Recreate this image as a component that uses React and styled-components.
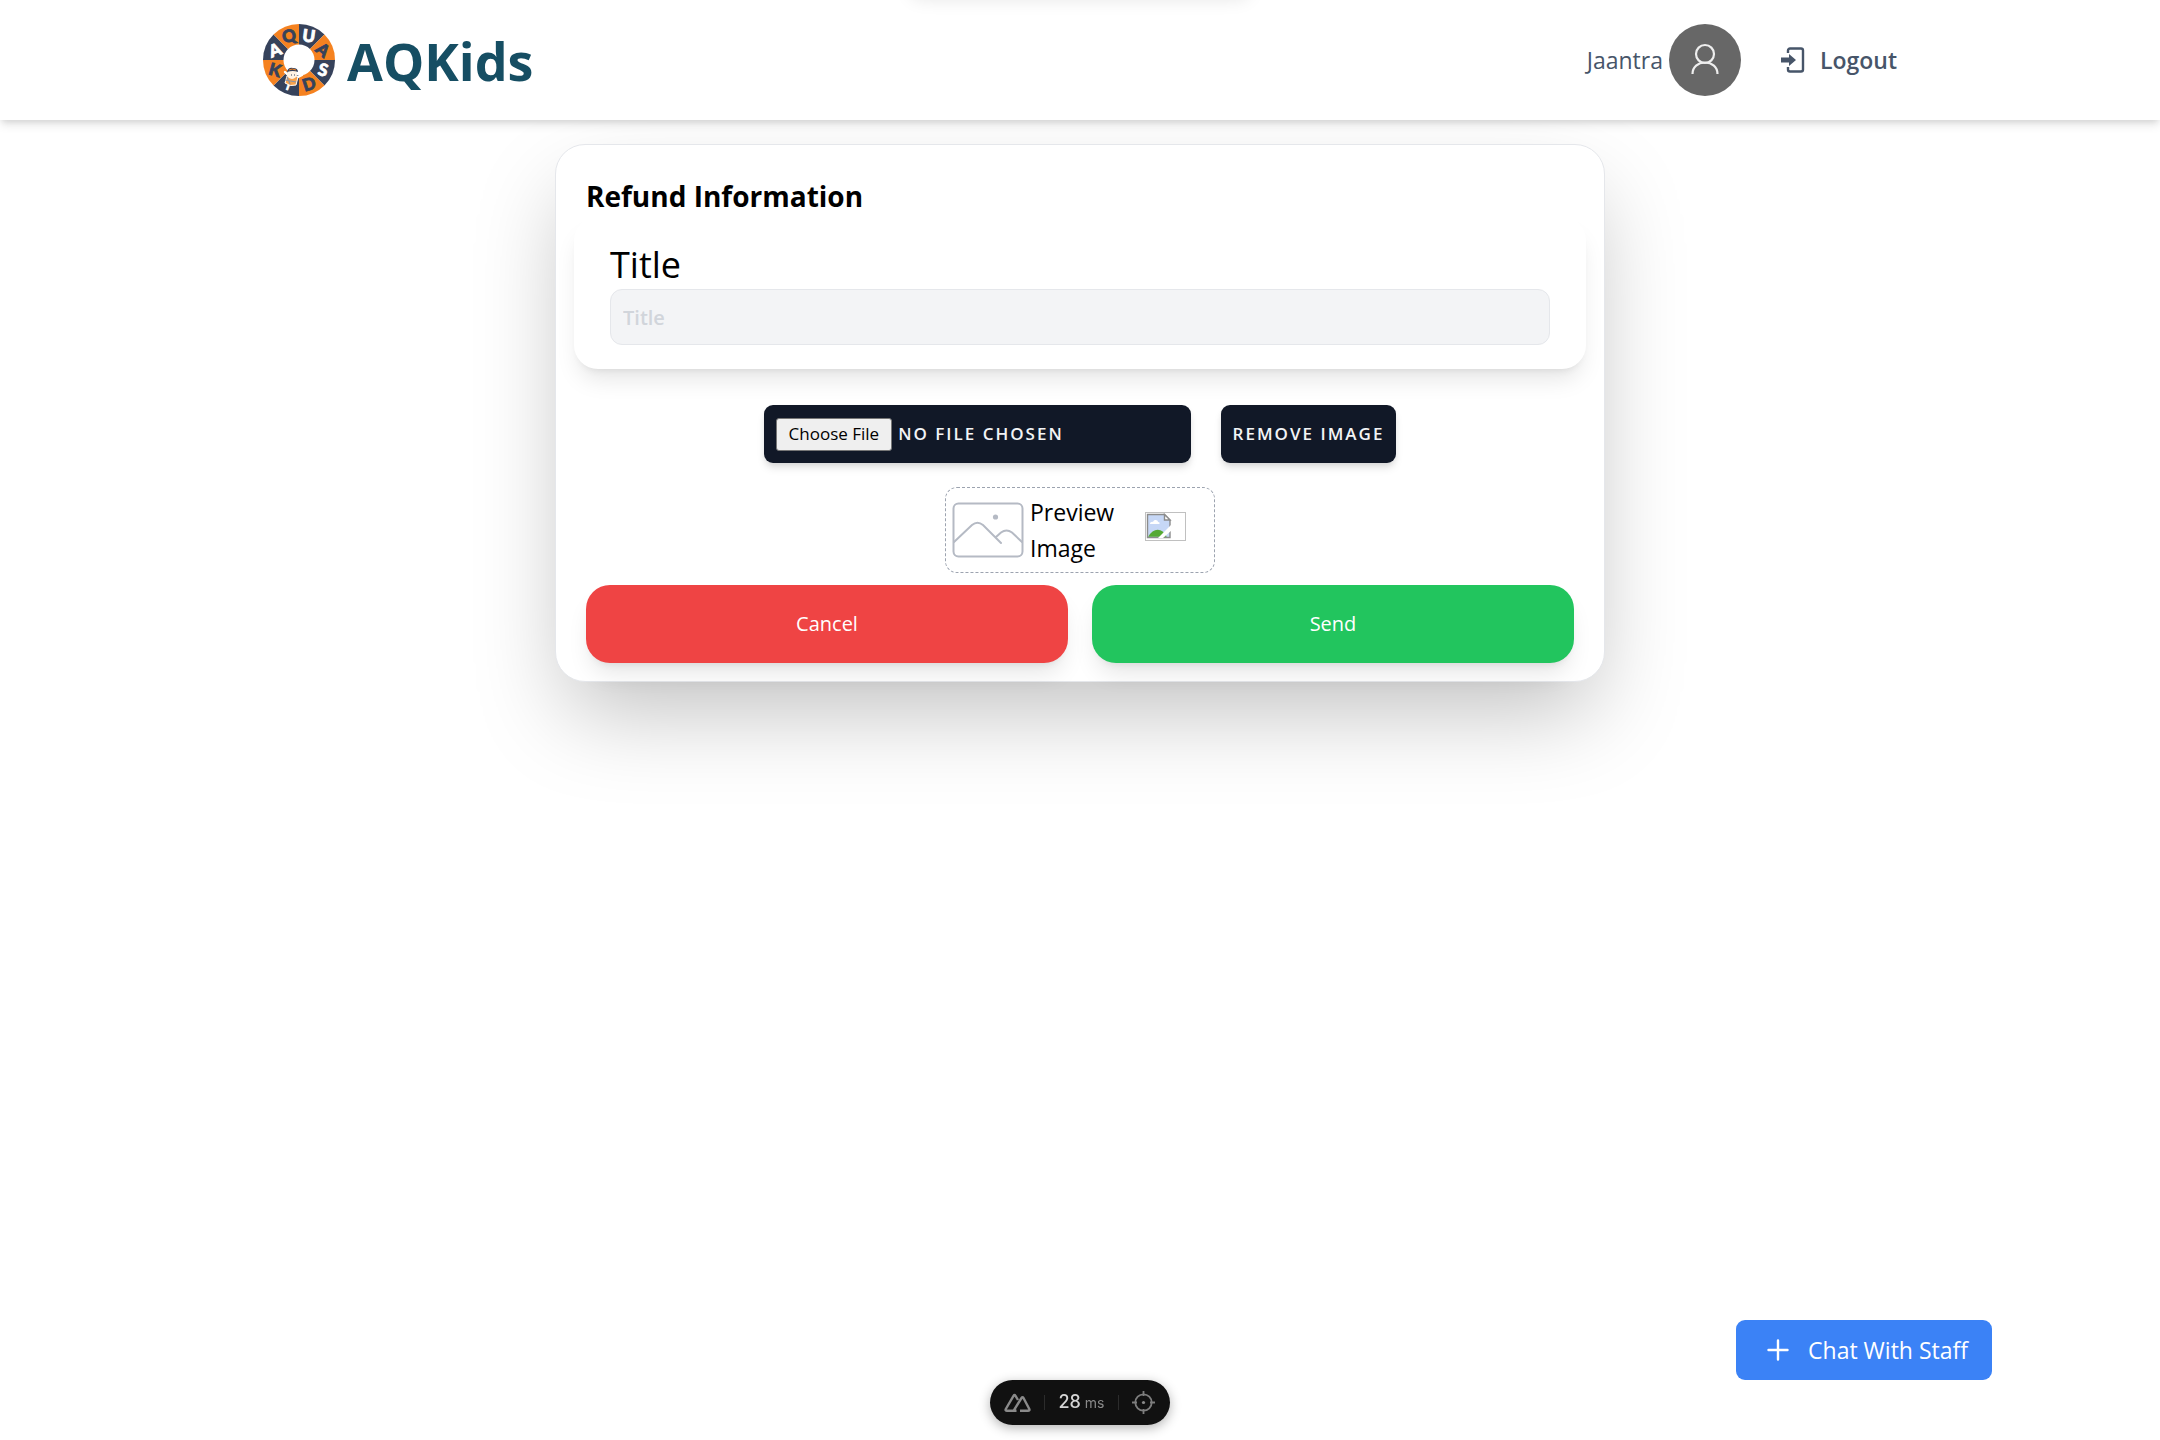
import React from "react";
import styled, { createGlobalStyle, css } from "styled-components";

const GlobalStyle = createGlobalStyle`
  *, *::before, *::after { box-sizing: border-box; }
  body {
    margin: 0;
    background: #fff;
    color: #000;
    font-family: "Open Sans", "Noto Sans", sans-serif;
    font-size: 23px;
    line-height: 36px;
  }
  h1, h2, p { margin: 0; }
  button, input { font: inherit; }
  button { border: 0; cursor: pointer; }
`;

const Header = styled.header`
  position: relative;
  background: #fff;
  box-shadow: 0 6px 9px -1px rgba(0, 0, 0, 0.1), 0 3px 6px -2px rgba(0, 0, 0, 0.1);
`;

const HeaderInner = styled.div`
  display: flex;
  align-items: center;
  justify-content: space-between;
  max-width: 1634px;
  height: 120px;
  margin: 0 auto;
`;

const Brand = styled.a`
  display: flex;
  align-items: center;
  gap: 12px;
  color: #164e63;
  font-size: 52px;
  font-weight: 700;
  line-height: 60px;
  text-decoration: none;
`;

const BrandName = styled.span`
  padding-top: 2px;
`;

const Account = styled.div`
  display: flex;
  align-items: center;
  gap: 6px;
  color: #475569;
`;

const Avatar = styled.span`
  display: grid;
  place-items: center;
  width: 72px;
  height: 72px;
  border-radius: 50%;
  background: #676767;
`;

const LogoutButton = styled.button`
  display: flex;
  align-items: center;
  gap: 14px;
  margin-left: 33px;
  padding: 0;
  background: none;
  color: #475569;
  font-weight: 600;
`;

const Main = styled.main`
  display: flex;
  align-items: flex-start;
  justify-content: center;
  min-height: calc(100vh - 120px);
  padding: 24px;
`;

const Card = styled.form`
  width: 100%;
  max-width: 1050px;
  padding: 18px;
  border: 1px solid #e5e7eb;
  border-radius: 30px;
  background: #fff;
  box-shadow: 0 40px 90px -12px rgba(0, 0, 0, 0.25);
`;

const CardTitle = styled.h1`
  padding: 12px 12px 0;
  font-size: 28px;
  font-weight: 700;
  line-height: 42px;
`;

const Panel = styled.section`
  padding: 24px 36px;
  border-radius: 24px;
  box-shadow: 0 15px 23px -5px rgba(0, 0, 0, 0.1), 0 6px 9px -6px rgba(0, 0, 0, 0.1);
`;

const FieldLabel = styled.label`
  display: block;
  font-size: 36px;
  font-weight: 500;
  line-height: 48px;
`;

const TextField = styled.input`
  display: block;
  width: 100%;
  height: 56px;
  padding: 0 12px;
  border: 1px solid #e5e7eb;
  border-radius: 12px;
  background: #f3f4f6;
  font-size: 20px;
  font-weight: 600;
  &::placeholder { color: #d1d5db; opacity: 1; }
`;

const UploadRow = styled.div`
  display: flex;
  justify-content: center;
  gap: 30px;
  margin-top: 36px;
`;

const darkControl = css`
  height: 58px;
  padding: 12px;
  border-radius: 9px;
  background: #111827;
  box-shadow: 0 6px 9px -1px rgba(0, 0, 0, 0.1), 0 3px 6px -2px rgba(0, 0, 0, 0.1);
  color: #f3f4f6;
  font-size: 17px;
  font-weight: 600;
  letter-spacing: 2px;
  line-height: 34px;
  text-transform: uppercase;
`;

const FileInput = styled.input`
  ${darkControl}
  width: 427px;
  &::file-selector-button {
    height: 33px;
    margin: 0 6px 0 0;
    padding: 0 12px;
    border: 1px solid #767676;
    border-radius: 3px;
    background: #efefef;
    color: #000;
    font: 400 17px/30px "Open Sans", "Noto Sans", sans-serif;
    letter-spacing: normal;
    text-transform: none;
  }
`;

const DarkButton = styled.button`
  ${darkControl}
`;

const Preview = styled.figure`
  display: flex;
  align-items: center;
  width: 270px;
  margin: 24px auto 12px;
  padding: 6px;
  border: 1px dashed #9ca3af;
  border-radius: 12px;
`;

const PreviewText = styled.figcaption`
  flex: 1;
  padding-left: 6px;
  line-height: 36px;
`;

const MissingImage = styled.span`
  display: flex;
  width: 41px;
  height: 29px;
  margin: 0 22px 8px 0;
  border: 1px solid #c0c0c0;
`;

const Actions = styled.div`
  display: grid;
  grid-template-columns: 1fr 1fr;
  gap: 24px;
  padding: 0 12px;
`;

const ActionButton = styled.button`
  height: 78px;
  border-radius: 24px;
  background: ${(p) => p.$color};
  box-shadow: 0 15px 23px -5px rgba(0, 0, 0, 0.1), 0 6px 9px -6px rgba(0, 0, 0, 0.1);
  color: #fff;
  font-size: 20px;
`;

const ChatButton = styled.button`
  position: fixed;
  right: 168px;
  bottom: 60px;
  display: flex;
  align-items: center;
  gap: 18px;
  height: 60px;
  padding: 0 24px 0 30px;
  border-radius: 9px;
  background: #3b82f6;
  color: #fff;
`;

const DevBar = styled.aside`
  position: fixed;
  bottom: 15px;
  left: 50%;
  display: flex;
  align-items: center;
  justify-content: space-between;
  width: 180px;
  height: 45px;
  padding: 0 15px 0 14px;
  transform: translateX(-50%);
  border-radius: 23px;
  background: #111;
  box-shadow: 0 3px 12px rgba(0, 0, 0, 0.3);
  color: #d4d4d4;
  font-family: Inter, "Liberation Sans", sans-serif;
  font-size: 18px;
  font-weight: 500;
`;

const Divider = styled.span`
  width: 1px;
  height: 15px;
  background: #2c2c2c;
`;

const Timing = styled.span`
  display: flex;
  align-items: baseline;
  gap: 4px;
`;

const Unit = styled.small`
  color: #8a8a8a;
  font-size: 14px;
  font-weight: 400;
`;

const Toast = styled.div`
  position: fixed;
  z-index: 1;
  top: -60px;
  left: 50%;
  width: 340px;
  height: 54px;
  transform: translateX(-50%);
  border-radius: 12px;
  box-shadow: 0 5px 18px rgba(0, 0, 0, 0.1);
`;

const RING = [
  ["U", "#36425b", "#fff"],
  ["A", "#f58220", "#36425b"],
  ["S", "#36425b", "#fff"],
  ["D", "#f58220", "#36425b"],
  ["I", "#36425b", "#fff"],
  ["K", "#f58220", "#36425b"],
  ["A", "#36425b", "#fff"],
  ["Q", "#f58220", "#36425b"],
];
const LETTER_TURN = [8, 40, 15, -18, 20, 15, -20, -12];

function ringPoint(deg, r) {
  const a = (deg * Math.PI) / 180;
  return [36 + r * Math.sin(a), 36 - r * Math.cos(a)];
}

function Logo() {
  return (
    <svg width="72" height="72" viewBox="0 0 72 72" aria-hidden="true">
      {RING.map(([, fill], i) => {
        const [x1, y1] = ringPoint(i * 45, 36);
        const [x2, y2] = ringPoint(i * 45 + 45, 36);
        return <path key={i} fill={fill} d={`M36 36L${x1} ${y1}A36 36 0 0 1 ${x2} ${y2}Z`} />;
      })}
      <circle cx="36" cy="36" r="15.5" fill="#fff" />
      {RING.map(([letter, , ink], i) => {
        const [x, y] = ringPoint(i * 45 + 22.5, 26);
        return (
          <text
            key={i}
            x={x}
            y={y + 6}
            transform={`rotate(${LETTER_TURN[i]} ${x} ${y})`}
            fill={ink}
            stroke={ink}
            strokeWidth="0.8"
            fontFamily="Lato, sans-serif"
            fontSize={letter === "I" ? 10 : 17}
            fontWeight="900"
            textAnchor="middle"
          >
            {letter}
          </text>
        );
      })}
      <path d="M22 48l5 5M39 51l-6 3" stroke="#fff" strokeWidth="2.4" strokeLinecap="round" />
      <path d="M24 52q5-3 11 1l-2 8q-6 2-11-2z" fill="#f9a24b" stroke="#fff" />
      <path d="M22 56l11 2M24 53l3 7" stroke="#8a93a3" strokeWidth="1.2" />
      <circle cx="29" cy="50" r="5" fill="#fff3e4" />
      <path d="M24 48q1-5 6-4 5 0 5 4-5-2-11 0z" fill="#36425b" />
      <path d="M26 46q3-2 7 0" stroke="#f58220" fill="none" />
      <path d="M28 51h1M31 51h1" stroke="#36425b" />
    </svg>
  );
}

function UserIcon() {
  return (
    <svg width="30" height="34" viewBox="0 0 30 34" fill="none" stroke="#eee" strokeWidth="2.2" aria-hidden="true">
      <circle cx="15" cy="11" r="9" />
      <path d="M2.500 31c0-7 5.500-11.500 12.500-11.500s12.500 4.500 12.500 11.500" />
    </svg>
  );
}

function LogoutIcon() {
  return (
    <svg width="26" height="28" viewBox="0 0 26 28" fill="none" aria-hidden="true">
      <path d="M8 7V4.500a2 2 0 0 1 2-2h11a2 2 0 0 1 2 2v19a2 2 0 0 1-2 2H10a2 2 0 0 1-2-2V21" stroke="#475569" strokeWidth="2.400" />
      <path d="M1 11.500h8V8l7 6-7 6v-3.500H1z" fill="#475569" />
    </svg>
  );
}

function PictureIcon() {
  return (
    <svg width="72" height="56" viewBox="0 0 72 56" fill="none" stroke="#b5bac4" strokeWidth="2" strokeLinecap="round" aria-hidden="true">
      <rect x="1.500" y="1.500" width="69" height="53" rx="5" />
      <path d="M2 40L20 23q5.500-4.500 11 0L49 41M44 35l5-4.500q5.500-4 11 0L70 40" />
      <circle cx="43.500" cy="15" r="2.600" fill="#b5bac4" stroke="none" />
    </svg>
  );
}

function BrokenIcon() {
  return (
    <svg width="26" height="26" viewBox="0 0 26 26" aria-hidden="true">
      <path d="M1.500 1.500h17l5.500 5.500v17.500H1.500z" fill="#c6d7f6" stroke="#8c8c8c" strokeWidth="1.400" />
      <path d="M4 11c0-2 2-2.500 3-2 1-3 5-2 5 0 2 0 2 2 1 2z" fill="#fff" />
      <path d="M2.200 23.800q4-7 9.500-7t9 7z" fill="#55a934" />
      <path d="M18.500 1.500V7H24z" fill="#fff" stroke="#8c8c8c" strokeWidth="1.400" />
      <path d="M25 12L12 25h5l9-8z" fill="#fff" />
    </svg>
  );
}

function PlusIcon() {
  return (
    <svg width="24" height="24" viewBox="0 0 24 24" stroke="#fff" strokeWidth="2.400" strokeLinecap="round" aria-hidden="true">
      <path d="M12 2.500v19M2.500 12h19" />
    </svg>
  );
}

function PeaksIcon() {
  return (
    <svg width="27" height="20" viewBox="0 0 27 20" fill="none" stroke="#8a8a8a" strokeWidth="2.400" strokeLinejoin="round" aria-hidden="true">
      <path d="M12.500 17.800H3q-2 0-1.200-1.800L9.500 2.800q1-1.500 2 0L14 7M9.500 17.800L17.500 5q1-1.500 2 0L25.300 16q.7 1.800-1.300 1.800h-8" />
    </svg>
  );
}

function TargetIcon() {
  return (
    <svg width="23" height="23" viewBox="0 0 23 23" fill="none" stroke="#7d7d7d" strokeWidth="1.800" aria-hidden="true">
      <circle cx="11.500" cy="11.500" r="8.200" />
      <path d="M11.500 0v5M11.500 18v5M0 11.500h5M18 11.500h5" />
      <circle cx="11.500" cy="11.500" r="1.600" fill="#8a8a8a" stroke="none" />
    </svg>
  );
}

export default function App() {
  return (
    <>
      <GlobalStyle />
      <Toast />
      <Header>
        <HeaderInner>
          <Brand href="#">
            <Logo />
            <BrandName>AQKids</BrandName>
          </Brand>
          <Account>
            <span>Jaantra</span>
            <Avatar>
              <UserIcon />
            </Avatar>
            <LogoutButton type="button">
              <LogoutIcon />
              Logout
            </LogoutButton>
          </Account>
        </HeaderInner>
      </Header>
      <Main>
        <Card onSubmit={(e) => e.preventDefault()}>
          <CardTitle>Refund Information</CardTitle>
          <Panel>
            <FieldLabel htmlFor="title">Title</FieldLabel>
            <TextField id="title" type="text" placeholder="Title" />
          </Panel>
          <UploadRow>
            <FileInput type="file" accept="image/*" aria-label="Refund image" />
            <DarkButton type="button">Remove Image</DarkButton>
          </UploadRow>
          <Preview>
            <PictureIcon />
            <PreviewText>
              Preview
              <br />
              Image
            </PreviewText>
            <MissingImage>
              <BrokenIcon />
            </MissingImage>
          </Preview>
          <Actions>
            <ActionButton type="button" $color="#ef4444">Cancel</ActionButton>
            <ActionButton type="submit" $color="#22c55e">Send</ActionButton>
          </Actions>
        </Card>
      </Main>
      <ChatButton type="button">
        <PlusIcon />
        Chat With Staff
      </ChatButton>
      <DevBar>
        <PeaksIcon />
        <Divider />
        <Timing>
          28 <Unit>ms</Unit>
        </Timing>
        <Divider />
        <TargetIcon />
      </DevBar>
    </>
  );
}
